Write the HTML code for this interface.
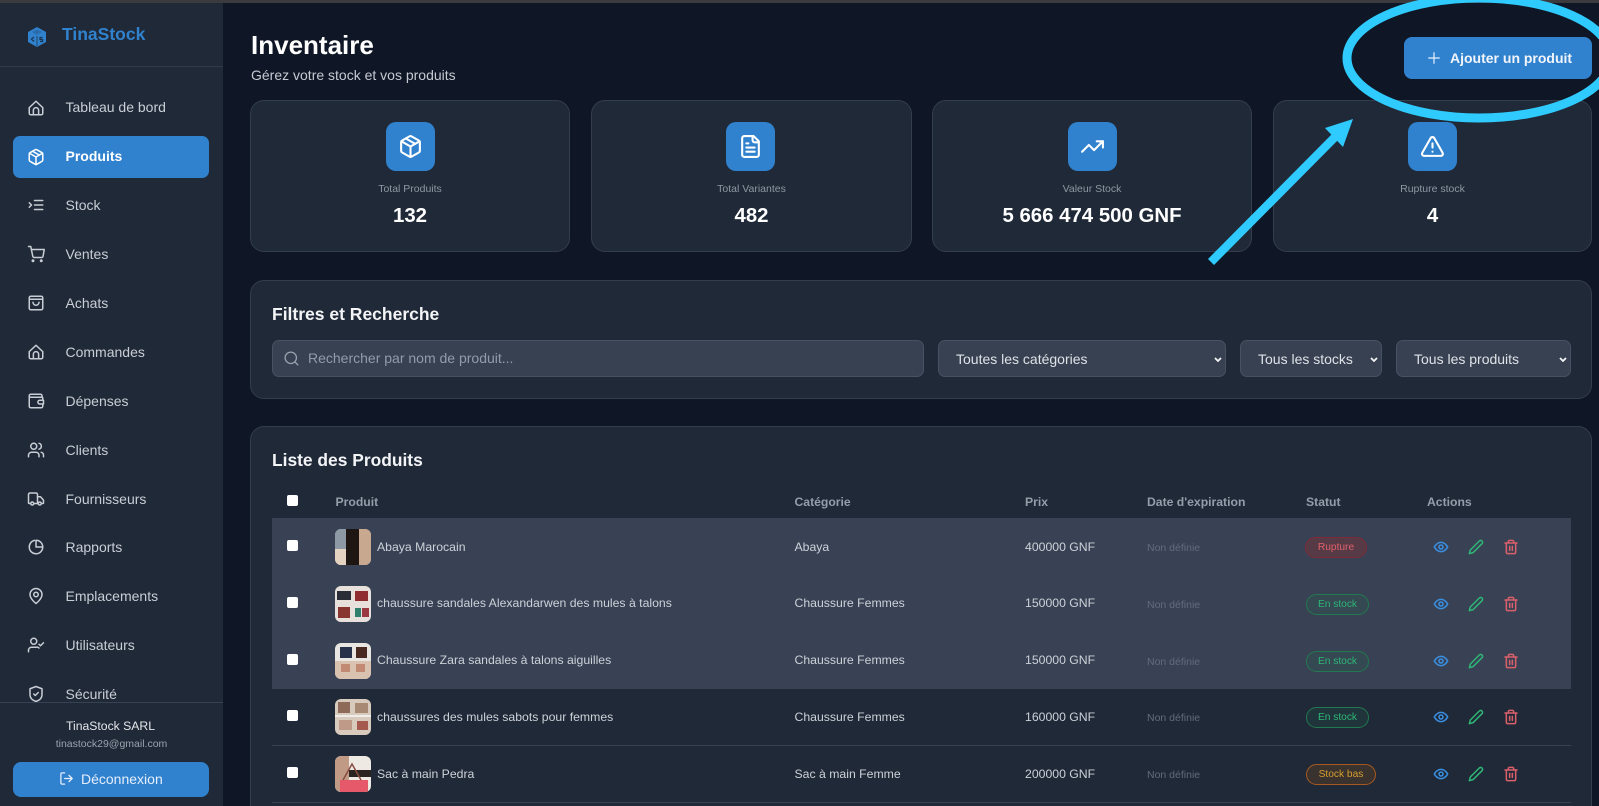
<!DOCTYPE html>
<html lang="fr"><head><meta charset="utf-8"><title>TinaStock</title>
<style>
*{box-sizing:border-box}
html,body{margin:0;padding:0;width:1599px;height:806px;overflow:hidden;background:#0f1625;font-family:"Liberation Sans",sans-serif;color:#e5e7eb}
#root{position:relative;width:1599px;height:806px;overflow:hidden;background:#0f1625;filter:blur(.3px)}
.a{position:absolute}
.t{position:absolute;white-space:nowrap;height:20px;line-height:20px}
.side{position:absolute;left:0;top:3px;width:223px;height:803px;background:#1f2937}
.nav{position:absolute;left:65.5px;font-size:14px;color:#c9ced6;white-space:nowrap;height:20px;line-height:20px}
.ni{position:absolute;left:27px;width:18px;height:18px;color:#c9ced6}
svg{display:block}
.ic{fill:none;stroke:currentColor;stroke-width:2;stroke-linecap:round;stroke-linejoin:round}
.card{position:absolute;background:#1f2937;border:1px solid #323d4d;border-radius:14px}
.box{position:absolute;width:49px;height:49px;top:122px;background:#3182ce;border-radius:10px;color:#fff;padding:12px}
.lab{position:absolute;top:178.500px;height:20px;line-height:20px;font-size:10.500px;color:#8f97a3;text-align:center}
.val{position:absolute;top:204px;height:24px;line-height:24px;font-size:20.400px;font-weight:700;color:#fff;text-align:center}
select{position:absolute;top:340px;height:37px;background:#374151;border:1px solid #465162;border-radius:7px;color:#dfe3e8;font:14px "Liberation Sans",sans-serif;outline:0;appearance:none;-webkit-appearance:none}
.chev{position:absolute;top:357px;width:8px;height:5px;fill:none;stroke:#f3f4f6;stroke-width:1.800}
.th{font-size:12.200px;font-weight:700;color:#959daa}
.td{font-size:12.250px;color:#cdd2d9}
.nd{font-size:10.500px;color:#616c7c}
.cb{position:absolute;left:287px;width:11px;height:11px;background:#fff;border-radius:2px}
.thumb{position:absolute;left:335px;width:36px;height:36px;border-radius:6px;overflow:hidden}
.badge{position:absolute;left:1306px;height:21px;line-height:19px;border-radius:11px;font-size:10.200px;text-align:center;border:1px solid}
.r{color:#e0606a;background:rgba(155,44,44,.3);border-color:#7f2a38;width:62px}
.g{color:#2fb577;background:rgba(39,103,73,.2);border-color:#22784f;width:63px}
.y{color:#d69e2e;background:rgba(156,80,20,.22);border-color:#a8591f;width:70px}
.act{position:absolute;width:16px;height:16px;stroke-width:2.300}
</style></head>
<body>
<svg width="0" height="0" style="position:absolute">
<symbol id="home" viewBox="0 0 24 24"><path d="M3 11.5 12 3l9 8.500V19a2 2 0 0 1-2 2H5a2 2 0 0 1-2-2z"/><path d="M8.500 21v-6a3.500 3.500 0 0 1 7 0v6"/></symbol>
<symbol id="box" viewBox="0 0 24 24"><path d="M21 8a2 2 0 0 0-1-1.730l-7-4a2 2 0 0 0-2 0l-7 4A2 2 0 0 0 3 8v8a2 2 0 0 0 1 1.730l7 4a2 2 0 0 0 2 0l7-4A2 2 0 0 0 21 16z"/><path d="m3.300 7 8.700 5 8.700-5"/><path d="M12 22V12"/><path d="m7.500 4.300 9 5.200"/></symbol>
<symbol id="stock" viewBox="0 0 24 24"><path d="M10 6h11M10 12h11M10 18h11"/><path d="m3 9 3 3-3 3"/></symbol>
<symbol id="cart" viewBox="0 0 24 24"><circle cx="8" cy="21" r="1"/><circle cx="19" cy="21" r="1"/><path d="M2 2h3l2.700 13a2 2 0 0 0 2 1.600h9.700a2 2 0 0 0 2-1.600L23 6H6"/></symbol>
<symbol id="bag" viewBox="0 0 24 24"><rect x="3" y="3" width="18" height="18" rx="2"/><path d="M3 7h18"/><path d="M8 11a4 4 0 0 0 8 0"/></symbol>
<symbol id="wallet" viewBox="0 0 24 24"><path d="M20 7V5a2 2 0 0 0-2-2H5a2 2 0 0 0-2 2v14a2 2 0 0 0 2 2h14a2 2 0 0 0 2-2v-3"/><path d="M3 7h17a1 1 0 0 1 1 1v3"/><path d="M22 11h-5a2 2 0 0 0 0 5h5z"/></symbol>
<symbol id="users" viewBox="0 0 24 24"><circle cx="9" cy="7" r="4"/><path d="M2 21v-2a4 4 0 0 1 4-4h6a4 4 0 0 1 4 4v2"/><path d="M16 3.100a4 4 0 0 1 0 7.800"/><path d="M22 21v-2a4 4 0 0 0-3-3.900"/></symbol>
<symbol id="truck" viewBox="0 0 24 24"><path d="M14 18V6a2 2 0 0 0-2-2H4a2 2 0 0 0-2 2v11a1 1 0 0 0 1 1h2"/><path d="M15 18H9"/><path d="M14 9h4l4 4.500V17a1 1 0 0 1-1 1h-2"/><circle cx="7" cy="18" r="2"/><circle cx="17" cy="18" r="2"/></symbol>
<symbol id="pie" viewBox="0 0 24 24"><path d="M21 12A9 9 0 1 1 10 3.200"/><path d="M21 12a9 9 0 0 0-9-9v9z"/></symbol>
<symbol id="pin" viewBox="0 0 24 24"><path d="M20 10c0 6-8 12-8 12s-8-6-8-12a8 8 0 0 1 16 0"/><circle cx="12" cy="10" r="3"/></symbol>
<symbol id="ucheck" viewBox="0 0 24 24"><circle cx="9" cy="7" r="4"/><path d="M2 21v-2a4 4 0 0 1 4-4h6a4 4 0 0 1 4 1"/><path d="m16 11 2 2 4-4"/></symbol>
<symbol id="shield" viewBox="0 0 24 24"><path d="M20 13c0 5-3.500 7.500-8 9-4.500-1.500-8-4-8-9V5l8-3 8 3z"/><path d="m9 12 2 2 4-4"/></symbol>
<symbol id="eye" viewBox="0 0 24 24"><path d="M2 12s3.500-7 10-7 10 7 10 7-3.500 7-10 7-10-7-10-7"/><circle cx="12" cy="12" r="3"/></symbol>
<symbol id="pen" viewBox="0 0 24 24"><path d="M17 3a2.800 2.800 0 0 1 4 4L7.500 20.500 2 22l1.500-5.500z"/></symbol>
<symbol id="trash" viewBox="0 0 24 24"><path d="M3 6h18"/><path d="M19 6v14a2 2 0 0 1-2 2H7a2 2 0 0 1-2-2V6"/><path d="M8 6V4a2 2 0 0 1 2-2h4a2 2 0 0 1 2 2v2"/><path d="M10 11v6M14 11v6"/></symbol>
</svg>

<div id="root">
<div class="a" style="left:0;top:0;width:1599px;height:3px;background:#3b3b3d"></div>

<div class="side">
<div class="a" style="left:0;top:63px;width:223px;height:1px;background:#2f3a4a"></div>
<div class="a" style="left:13px;top:133px;width:196px;height:42px;background:#3182ce;border-radius:7px"></div>
<div class="a" style="left:0;top:699px;width:223px;height:1px;background:#374151"></div>
<div class="a" style="left:13px;top:759px;width:196px;height:35px;background:#3182ce;border-radius:8px"></div>
</div>

<svg class="a" style="left:27px;top:26px" width="20" height="21" viewBox="0 0 20 21"><path d="M10 1 19 6v10l-9 5-9-5V6z" fill="#3182ce"/><path d="M10 3.500 15 6l-5 2.700L5 6z" fill="#2a6cab"/><path d="M7 11 4.500 13 7 15.500M15.500 11.500h-2.500v2h2.500v2H13" fill="none" stroke="#1c3552" stroke-width="1.300"/><path d="M10 10v10" stroke="#1c3552" stroke-width=".8"/></svg>
<div class="t" style="left:62px;top:24px;font-size:17.500px;font-weight:700;color:#3182ce">TinaStock</div>

<svg class="ni ic" style="top:99px"><use href="#home"/></svg><div class="nav" style="top:97px">Tableau de bord</div>
<svg class="ni ic" style="top:148px;color:#fff"><use href="#box"/></svg><div class="nav" style="top:146px;color:#fff;font-weight:700">Produits</div>
<svg class="ni ic" style="top:196px"><use href="#stock"/></svg><div class="nav" style="top:195px">Stock</div>
<svg class="ni ic" style="top:245px"><use href="#cart"/></svg><div class="nav" style="top:244px">Ventes</div>
<svg class="ni ic" style="top:294px"><use href="#bag"/></svg><div class="nav" style="top:293px">Achats</div>
<svg class="ni ic" style="top:343px"><use href="#home"/></svg><div class="nav" style="top:342px">Commandes</div>
<svg class="ni ic" style="top:392px"><use href="#wallet"/></svg><div class="nav" style="top:391px">Dépenses</div>
<svg class="ni ic" style="top:441px"><use href="#users"/></svg><div class="nav" style="top:440px">Clients</div>
<svg class="ni ic" style="top:490px"><use href="#truck"/></svg><div class="nav" style="top:489px">Fournisseurs</div>
<svg class="ni ic" style="top:538px"><use href="#pie"/></svg><div class="nav" style="top:537px">Rapports</div>
<svg class="ni ic" style="top:587px"><use href="#pin"/></svg><div class="nav" style="top:586px">Emplacements</div>
<svg class="ni ic" style="top:636px"><use href="#ucheck"/></svg><div class="nav" style="top:635px">Utilisateurs</div>
<div class="a" style="left:0;top:680px;width:223px;height:22px;overflow:hidden">
<svg class="ni ic" style="top:5px"><use href="#shield"/></svg><div class="nav" style="top:4px">Sécurité</div>
</div>

<div class="t" style="left:-1px;width:223px;text-align:center;top:716px;font-size:12.200px;color:#e5e7eb">TinaStock SARL</div>
<div class="t" style="left:0;width:223px;text-align:center;top:734px;font-size:10.500px;color:#9ca3af">tinastock29@gmail.com</div>
<svg class="a ic" style="left:59px;top:771px;color:#e5eefa" width="15" height="15" viewBox="0 0 24 24"><path d="M9 21H5a2 2 0 0 1-2-2V5a2 2 0 0 1 2-2h4"/><path d="m16 17 5-5-5-5"/><path d="M21 12H9"/></svg>
<div class="t" style="left:81px;top:769px;font-size:14px;color:#e5eefa">Déconnexion</div>

<div class="t" style="left:251px;top:30px;height:30px;line-height:30px;font-size:26px;font-weight:700;color:#fff">Inventaire</div>
<div class="t" style="left:251px;top:65px;font-size:14px;color:#c6cbd2">Gérez votre stock et vos produits</div>

<div class="a" style="left:1404px;top:37px;width:188px;height:42px;background:#3182ce;border-radius:8px"></div>
<svg class="a ic" style="left:1425px;top:49px;color:#e8f1fb;stroke-width:1.600" width="18" height="18" viewBox="0 0 24 24"><path d="M5 12h14M12 5v14"/></svg>
<div class="t" style="left:1450px;top:47.500px;font-size:14px;font-weight:700;color:#f1f5fa">Ajouter un produit</div>

<div class="card" style="left:250px;top:100px;width:320px;height:152px"></div>
<div class="card" style="left:591px;top:100px;width:321px;height:152px"></div>
<div class="card" style="left:932px;top:100px;width:320px;height:152px"></div>
<div class="card" style="left:1273px;top:100px;width:319px;height:152px"></div>

<div class="box" style="left:386px"><svg class="ic" width="25" height="25" viewBox="0 0 24 24"><use href="#box"/></svg></div>
<div class="lab" style="left:250px;width:320px">Total Produits</div><div class="val" style="left:250px;width:320px">132</div>
<div class="box" style="left:726px"><svg class="ic" width="25" height="25" viewBox="0 0 24 24"><path d="M15 2H6a2 2 0 0 0-2 2v16a2 2 0 0 0 2 2h12a2 2 0 0 0 2-2V7z"/><path d="M14 2v4a2 2 0 0 0 2 2h4"/><path d="M10 9H8M16 13H8M16 17H8"/></svg></div>
<div class="lab" style="left:591px;width:321px">Total Variantes</div><div class="val" style="left:591px;width:321px">482</div>
<div class="box" style="left:1068px"><svg class="ic" width="25" height="25" viewBox="0 0 24 24"><path d="M22 7 13.500 15.500l-5-5L2 17"/><path d="M16 7h6v6"/></svg></div>
<div class="lab" style="left:932px;width:320px">Valeur Stock</div><div class="val" style="left:932px;width:320px">5 666 474 500 GNF</div>
<div class="box" style="left:1408px"><svg class="ic" width="25" height="25" viewBox="0 0 24 24"><path d="m21.700 18-8-14a2 2 0 0 0-3.500 0l-8 14A2 2 0 0 0 4 21h16a2 2 0 0 0 1.700-3"/><path d="M12 9v4M12 17h.01"/></svg></div>
<div class="lab" style="left:1273px;width:319px">Rupture stock</div><div class="val" style="left:1273px;width:319px">4</div>

<div class="card" style="left:250px;top:280px;width:1342px;height:119px"></div>
<div class="t" style="left:272px;top:304px;font-size:17.500px;font-weight:700;color:#f3f4f6">Filtres et Recherche</div>
<div class="a" style="left:272px;top:340px;width:652px;height:37px;background:#374151;border:1px solid #465162;border-radius:7px"></div>
<svg class="a ic" style="left:283px;top:350px;color:#9ca3af;stroke-width:1.800" width="17" height="17" viewBox="0 0 24 24"><circle cx="11" cy="11" r="8"/><path d="m21 21-4.300-4.300"/></svg>
<div class="t" style="left:308px;top:348px;font-size:14px;color:#939baa">Rechercher par nom de produit...</div>
<select style="left:938px;width:288px;padding-left:17px"><option>Toutes les catégories</option></select>
<select style="left:1240px;width:142px;padding-left:17px"><option>Tous les stocks</option></select>
<select style="left:1396px;width:175px;padding-left:17px"><option>Tous les produits</option></select>
<svg class="chev" style="left:1214px" viewBox="0 0 8 5"><path d="M1 1l3 3 3-3"/></svg>
<svg class="chev" style="left:1370px" viewBox="0 0 8 5"><path d="M1 1l3 3 3-3"/></svg>
<svg class="chev" style="left:1559px" viewBox="0 0 8 5"><path d="M1 1l3 3 3-3"/></svg>

<div class="card" style="left:250px;top:426px;width:1342px;height:400px"></div>
<div class="t" style="left:272px;top:450px;font-size:17.400px;font-weight:700;color:#f3f4f6">Liste des Produits</div>

<div class="cb" style="top:495px"></div>
<div class="t th" style="left:335.500px;top:492px">Produit</div>
<div class="t th" style="left:794.500px;top:492px">Catégorie</div>
<div class="t th" style="left:1025px;top:492px">Prix</div>
<div class="t th" style="left:1147px;top:492px">Date d'expiration</div>
<div class="t th" style="left:1306px;top:492px">Statut</div>
<div class="t th" style="left:1427px;top:492px">Actions</div>

<div class="a" style="left:272px;top:518px;width:1299px;height:171px;background:#384254"></div>
<div class="a" style="left:272px;top:745px;width:1299px;height:1px;background:#374151"></div>
<div class="a" style="left:272px;top:802px;width:1299px;height:1px;background:#374151"></div>

<div class="cb" style="top:540px"></div>
<svg class="thumb" style="top:529px" viewBox="0 0 36 36"><rect width="36" height="36" fill="#d8c6b4"/><rect width="11" height="20" fill="#8d9aa6"/><rect y="20" width="11" height="16" fill="#e3d3c0"/><rect x="11" width="13" height="36" fill="#1d1613"/><rect x="24" width="12" height="36" fill="#c9a890"/></svg>
<div class="t td" style="left:377px;top:537px">Abaya Marocain</div>
<div class="t td" style="left:794.500px;top:537px">Abaya</div>
<div class="t td" style="left:1025px;top:537px">400000 GNF</div>
<div class="t nd" style="left:1147px;top:537.500px">Non définie</div>
<div class="badge r" style="top:537px;left:1305px">Rupture</div>

<div class="cb" style="top:597px"></div>
<svg class="thumb" style="top:586px" viewBox="0 0 36 36"><rect width="36" height="36" fill="#e8e0da"/><rect x="2" y="5" width="14" height="9" fill="#2a2c38"/><rect x="20" y="5" width="13" height="10" fill="#8e2c30"/><rect x="3" y="21" width="12" height="11" fill="#8a3630"/><rect x="20" y="22" width="6" height="9" fill="#2f7f6c"/><rect x="27" y="22" width="7" height="9" fill="#9a3a40"/></svg>
<div class="t td" style="left:377px;top:593px">chaussure sandales Alexandarwen des mules à talons</div>
<div class="t td" style="left:794.500px;top:593px">Chaussure Femmes</div>
<div class="t td" style="left:1025px;top:593px">150000 GNF</div>
<div class="t nd" style="left:1147px;top:594.500px">Non définie</div>
<div class="badge g" style="top:594px">En stock</div>

<div class="cb" style="top:654px"></div>
<svg class="thumb" style="top:643px" viewBox="0 0 36 36"><rect width="36" height="36" fill="#e9e6e2"/><rect x="5" y="4" width="12" height="11" fill="#27314a"/><rect x="21" y="4" width="11" height="11" fill="#4a2a20"/><rect y="18" width="36" height="18" fill="#d9c2b0"/><rect x="6" y="21" width="9" height="8" fill="#c28a72"/><rect x="21" y="21" width="9" height="8" fill="#c28a72"/></svg>
<div class="t td" style="left:377px;top:650px">Chaussure Zara sandales à talons aiguilles</div>
<div class="t td" style="left:794.500px;top:650px">Chaussure Femmes</div>
<div class="t td" style="left:1025px;top:650px">150000 GNF</div>
<div class="t nd" style="left:1147px;top:651.500px">Non définie</div>
<div class="badge g" style="top:651px">En stock</div>

<div class="cb" style="top:710px"></div>
<svg class="thumb" style="top:699px" viewBox="0 0 36 36"><rect width="36" height="36" fill="#d8cabc"/><rect x="3" y="3" width="12" height="11" fill="#8e6a58"/><rect x="20" y="4" width="13" height="10" fill="#a88a74"/><rect y="16" width="36" height="2" fill="#f0ece8"/><rect x="4" y="21" width="13" height="10" fill="#c09a88"/><rect x="22" y="22" width="11" height="9" fill="#a55a50"/></svg>
<div class="t td" style="left:377px;top:707px">chaussures des mules sabots pour femmes</div>
<div class="t td" style="left:794.500px;top:707px">Chaussure Femmes</div>
<div class="t td" style="left:1025px;top:707px">160000 GNF</div>
<div class="t nd" style="left:1147px;top:707.500px">Non définie</div>
<div class="badge g" style="top:707px">En stock</div>

<div class="cb" style="top:767px"></div>
<svg class="thumb" style="top:756px" viewBox="0 0 36 36"><rect width="36" height="36" fill="#efe9e4"/><rect width="14" height="36" fill="#c09a84"/><rect x="14" y="14" width="22" height="7" fill="#2a2320"/><rect x="5" y="24" width="28" height="12" fill="#e5596a"/><path d="M8 24 17 8l9 16" fill="none" stroke="#8a4c40" stroke-width="1.500"/></svg>
<div class="t td" style="left:377px;top:763.500px">Sac à main Pedra</div>
<div class="t td" style="left:794.500px;top:763.500px">Sac à main Femme</div>
<div class="t td" style="left:1025px;top:763.500px">200000 GNF</div>
<div class="t nd" style="left:1147px;top:764.500px">Non définie</div>
<div class="badge y" style="top:764px">Stock bas</div>

<svg class="act ic" style="left:1433px;top:539px;color:#3a8ee0"><use href="#eye"/></svg><svg class="act ic" style="left:1468px;top:539px;color:#2fb577"><use href="#pen"/></svg><svg class="act ic" style="left:1503px;top:539px;color:#d9606a"><use href="#trash"/></svg>
<svg class="act ic" style="left:1433px;top:596px;color:#3a8ee0"><use href="#eye"/></svg><svg class="act ic" style="left:1468px;top:596px;color:#2fb577"><use href="#pen"/></svg><svg class="act ic" style="left:1503px;top:596px;color:#d9606a"><use href="#trash"/></svg>
<svg class="act ic" style="left:1433px;top:653px;color:#3a8ee0"><use href="#eye"/></svg><svg class="act ic" style="left:1468px;top:653px;color:#2fb577"><use href="#pen"/></svg><svg class="act ic" style="left:1503px;top:653px;color:#d9606a"><use href="#trash"/></svg>
<svg class="act ic" style="left:1433px;top:709px;color:#3a8ee0"><use href="#eye"/></svg><svg class="act ic" style="left:1468px;top:709px;color:#2fb577"><use href="#pen"/></svg><svg class="act ic" style="left:1503px;top:709px;color:#d9606a"><use href="#trash"/></svg>
<svg class="act ic" style="left:1433px;top:766px;color:#3a8ee0"><use href="#eye"/></svg><svg class="act ic" style="left:1468px;top:766px;color:#2fb577"><use href="#pen"/></svg><svg class="act ic" style="left:1503px;top:766px;color:#d9606a"><use href="#trash"/></svg>

<svg class="a" style="left:0;top:0" width="1599" height="806" viewBox="0 0 1599 806">
<ellipse cx="1479" cy="58" rx="132" ry="60" fill="none" stroke="#2fcbff" stroke-width="9"/>
<path d="M1211 262 1336 136" stroke="#2fcbff" stroke-width="8.500" fill="none"/>
<path d="M1353 119 1325 128 1343 147z" fill="#2fcbff"/>
</svg>
</div>
</body></html>
